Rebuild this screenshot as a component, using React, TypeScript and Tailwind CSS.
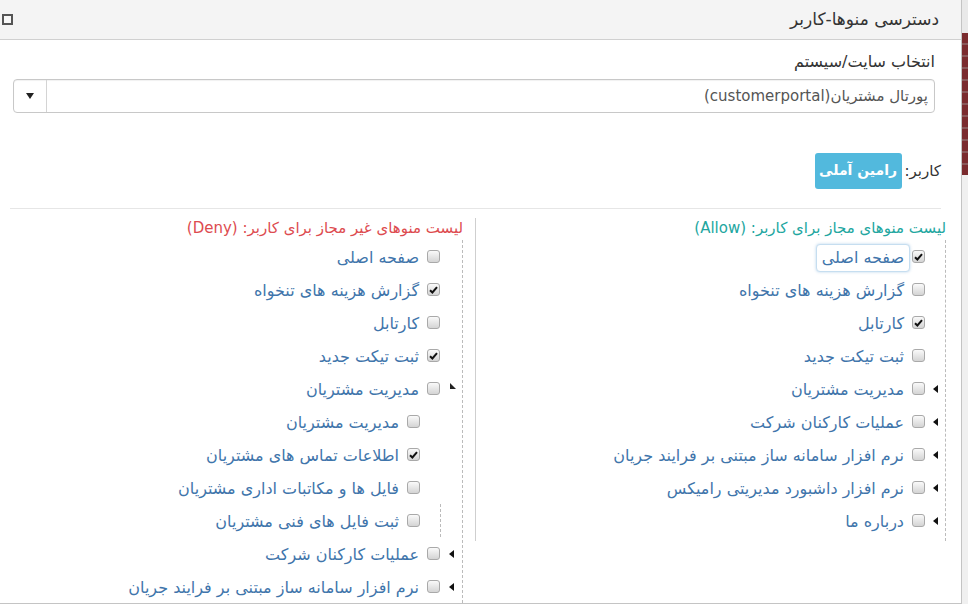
import React from 'react'

type Item = {
  label: string
  checked?: boolean
  arrow?: 'closed' | 'open'
  active?: boolean
  children?: Item[]
}

const allowItems: Item[] = [
  { label: 'صفحه اصلی', checked: true, active: true },
  { label: 'گزارش هزینه های تنخواه' },
  { label: 'کارتابل', checked: true },
  { label: 'ثبت تیکت جدید' },
  { label: 'مدیریت مشتریان', arrow: 'closed' },
  { label: 'عملیات کارکنان شرکت', arrow: 'closed' },
  { label: 'نرم افزار سامانه ساز مبتنی بر فرایند جریان', arrow: 'closed' },
  { label: 'نرم افزار داشبورد مدیریتی رامیکس', arrow: 'closed' },
  { label: 'درباره ما', arrow: 'closed' },
]

const denyItems: Item[] = [
  { label: 'صفحه اصلی' },
  { label: 'گزارش هزینه های تنخواه', checked: true },
  { label: 'کارتابل' },
  { label: 'ثبت تیکت جدید', checked: true },
  {
    label: 'مدیریت مشتریان',
    arrow: 'open',
    children: [
      { label: 'مدیریت مشتریان' },
      { label: 'اطلاعات تماس های مشتریان', checked: true },
      { label: 'فایل ها و مکاتبات اداری مشتریان' },
      { label: 'ثبت فایل های فنی مشتریان' },
    ],
  },
  { label: 'عملیات کارکنان شرکت', arrow: 'closed' },
  { label: 'نرم افزار سامانه ساز مبتنی بر فرایند جریان', arrow: 'closed' },
]

function Checkbox({ checked }: { checked?: boolean }) {
  return (
    <span className="flex h-[13px] w-[13px] shrink-0 items-center justify-center rounded-[3px] border border-[#a9a9a9] bg-gradient-to-b from-[#fafafa] to-[#d4d4d4]">
      {checked && (
        <svg width="9" height="8" viewBox="0 0 9 8">
          <path d="M1 4.2 L3.4 6.5 L8 1.2" fill="none" stroke="#111" strokeWidth="2" />
        </svg>
      )}
    </span>
  )
}

function Arrow({ kind }: { kind?: 'closed' | 'open' }) {
  if (kind === 'closed')
    return (
      <svg width="5" height="8" viewBox="0 0 5 8">
        <polygon points="5,0 5,8 0,4" fill="#111" />
      </svg>
    )
  if (kind === 'open')
    return (
      <svg width="6" height="6" viewBox="0 0 6 6" className="mt-[-6px] ml-[4px]">
        <polygon points="0,0 0,6 6,6" fill="#222" />
      </svg>
    )
  return null
}

function Row({ item, slot, last }: { item: Item; slot: string; last?: boolean }) {
  return (
    <li>
      <div className="flex h-[33px] items-center">
        <span className={`flex h-full shrink-0 items-center justify-center ${slot} ${last ? 'border-r border-dashed border-[#bbb]' : ''}`}>
          <Arrow kind={item.arrow} />
        </span>
        <Checkbox checked={item.checked} />
        <span
          className={`mr-[2px] mt-[3px] flex h-[28px] items-center whitespace-nowrap rounded-[4px] px-[5px] text-[16px] text-[#3f75ab] ${
            item.active ? 'border border-[#c6def0] bg-white shadow-[0_0_3px_rgba(100,160,210,0.45)]' : 'border border-transparent'
          }`}
        >
          {item.label}
        </span>
      </div>
      {item.children && (
        <ul className="mr-[21px]">
          {item.children.map((c, i) => (
            <Row key={i} item={c} slot="w-[21px]" last={i === item.children!.length - 1} />
          ))}
        </ul>
      )}
    </li>
  )
}

export default function App() {
  return (
    <div className="flex h-[604px] w-[968px] overflow-hidden bg-white" style={{ fontFamily: '"DejaVu Sans", sans-serif' }}>
      <div dir="rtl" className="flex h-[604px] w-[962px] shrink-0 flex-col border-b border-r border-[#c4c4c4]">
        <header className="flex h-[40px] shrink-0 items-center justify-between border-b border-[#d0d0d0] bg-[#f4f4f4] pl-[2px] pr-[22px]">
          <h1 className="text-[17px] text-[#333]">دسترسی منوها-کاربر</h1>
          <span className="h-[11px] w-[11px] border-2 border-[#555] bg-[#f8f8f8]" />
        </header>

        <div className="flex flex-col pl-[26px] pr-[26px]">
          <label className="mt-[12px] h-[20px] text-[16px] leading-[20px] text-[#333]">انتخاب سایت/سیستم</label>
          <div className="mt-[7px] ml-[-13px] flex h-[34px] items-center rounded-[4px] border border-[#c8c8c8] shadow-[inset_0_1px_1px_rgba(0,0,0,0.06)]">
            <span className="flex-1 pr-[6px] text-[15px] text-[#555]">پورتال مشتریان(customerportal)</span>
            <span className="flex h-full w-[33px] items-center justify-center border-r border-[#d4d4d4]">
              <svg width="8" height="6" viewBox="0 0 8 6">
                <polygon points="0,0 8,0 4,6" fill="#222" />
              </svg>
            </span>
          </div>
        </div>

        <div className="mt-[40px] flex items-center pr-[20px]">
          <span className="text-[15px] text-[#333]">کاربر:</span>
          <span className="mr-[3px] flex h-[36px] w-[87px] items-center justify-center rounded-[3px] bg-[#52b9dd] pb-[2px] text-[14px] font-bold text-white">
            رامین آملی
          </span>
        </div>

        <div className="mr-[20px] ml-[10px] mt-[19px] border-t border-[#e6e6e6]" />

        <div className="flex items-start pt-[9px]">
          <section className="w-[486px] shrink-0 border-l border-[#cfcfcf] pr-[15px]">
            <h2 className="h-[20px] text-[15px] leading-[20px] text-[#22a6a0]">لیست منوهای مجاز برای کاربر: (Allow)</h2>
            <ul className="mt-[2px] border-r border-dashed border-[#bbb] pb-[4px]">
              {allowItems.map((it, i) => (
                <Row key={i} item={it} slot="w-[20px]" />
              ))}
            </ul>
          </section>
          <section className="flex-1 pr-[12px]">
            <h2 className="h-[20px] text-[15px] leading-[20px] text-[#dd4b4f]">لیست منوهای غیر مجاز برای کاربر: (Deny)</h2>
            <ul className="mt-[2px] border-r border-dashed border-[#bbb] pb-[20px]">
              {denyItems.map((it, i) => (
                <Row key={i} item={it} slot="w-[22px]" />
              ))}
            </ul>
          </section>
        </div>
      </div>
      <div className="flex flex-1 flex-col">
        <div className="h-[33px] bg-[#e9e9e9]" />
        <div className="h-[142px] bg-[repeating-linear-gradient(180deg,#7b2b2e_0px,#7b2b2e_10px,#9a8585_11px,#7b2b2e_12px)]" />
        <div className="flex-1 bg-[#f0f0f0]" />
      </div>
    </div>
  )
}
